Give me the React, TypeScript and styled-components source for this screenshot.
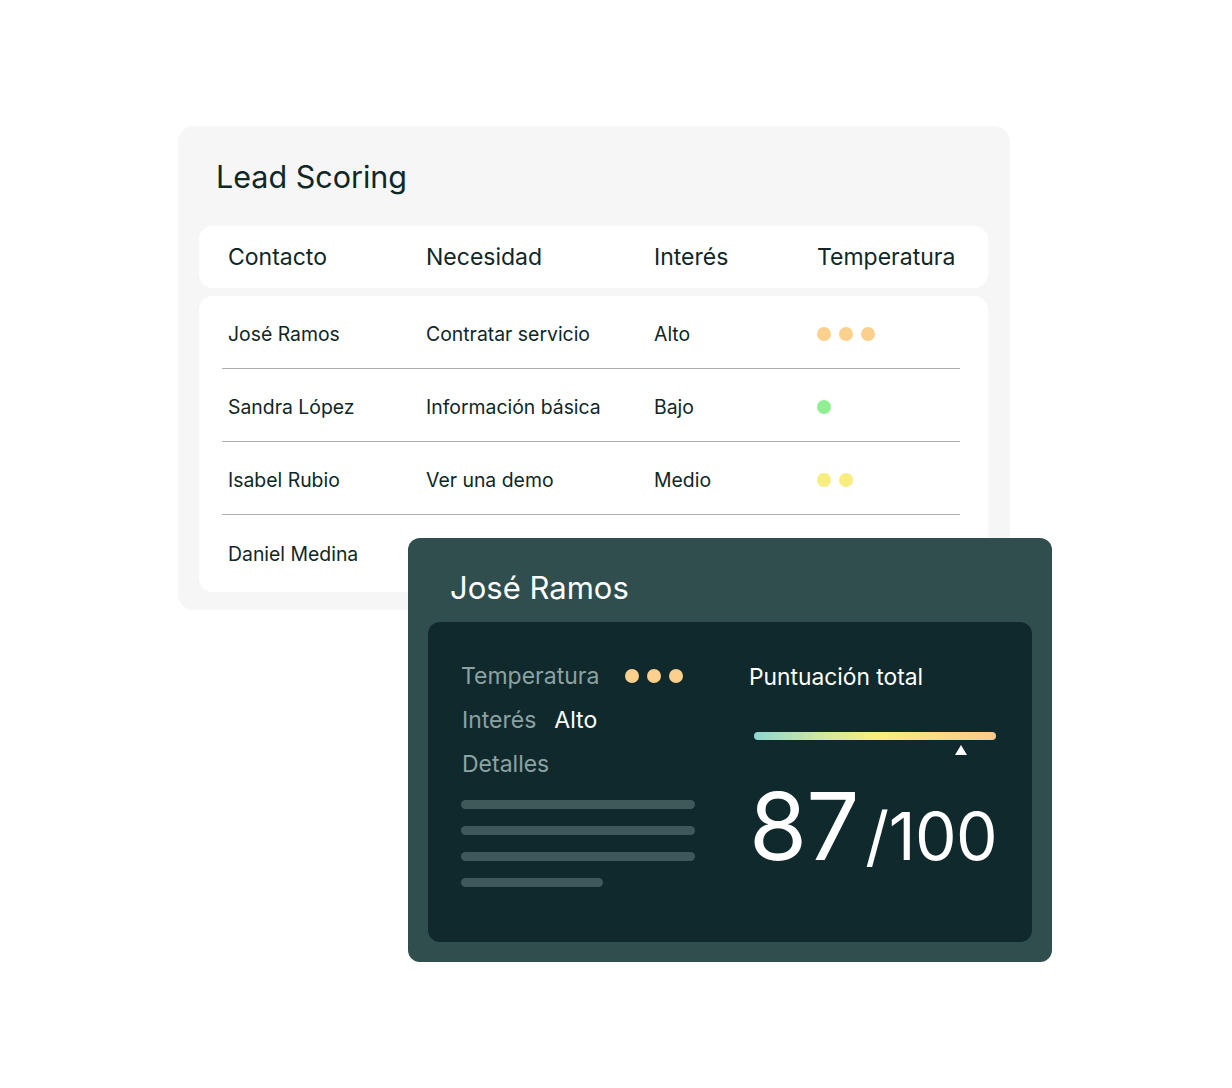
import React from "react";
import styled, { createGlobalStyle } from "styled-components";

type Temp = "hot" | "warm" | "cold";

type LeadType = {
  name: string;
  need: string;
  interest: string;
  temp: Temp;
};

const leads: LeadType[] = [
  { name: "José Ramos", need: "Contratar servicio", interest: "Alto", temp: "hot" },
  { name: "Sandra López", need: "Información básica", interest: "Bajo", temp: "cold" },
  { name: "Isabel Rubio", need: "Ver una demo", interest: "Medio", temp: "warm" },
  { name: "Daniel Medina", need: "", interest: "", temp: "cold" },
];

const tempColors: Record<Temp, { color: string; count: number }> = {
  hot: { color: "#fbcf8c", count: 3 },
  warm: { color: "#f8ee7f", count: 2 },
  cold: { color: "#90ef93", count: 1 },
};

const GlobalStyle = createGlobalStyle`
  body {
    margin: 0;
    background: #ffffff;
    font-family: Inter, "Noto Sans", sans-serif;
    color: #0f2727;
  }
`;

const Stage = styled.div`
  position: relative;
  width: 1232px;
  height: 1088px;
  box-sizing: border-box;
  padding: 126px 0 0 178px;
`;

const LeadCard = styled.div`
  width: 832px;
  height: 484px;
  box-sizing: border-box;
  background: #f6f6f6;
  border-radius: 16px;
  padding: 33px 22px 0 21px;
`;

const Title = styled.h1`
  margin: 0 0 31px 17px;
  font-size: 30.5px;
  line-height: 36px;
  font-weight: 400;
  color: #0f2727;
`;

const Columns = styled.div`
  display: grid;
  grid-template-columns: 198px 228px 163px 1fr;
  align-items: center;
`;

const HeaderBar = styled(Columns)`
  height: 62px;
  background: #ffffff;
  border-radius: 14px;
  padding-left: 29px;
  font-size: 23px;
  color: #0f2727;
`;

const Body = styled.div`
  margin-top: 8px;
  height: 296px;
  background: #ffffff;
  border-radius: 14px;
  padding: 0 28px 0 23px;
`;

const Row = styled(Columns)<{ $last?: boolean }>`
  height: 73px;
  box-sizing: border-box;
  padding: 4px 0 0 6px;
  border-bottom: ${(p) => (p.$last ? "none" : "1px solid #acacac")};
  font-size: 19.4px;
  color: #0f2727;
`;

const Dots = styled.div<{ $gap: number }>`
  display: flex;
  align-items: center;
  gap: ${(p) => p.$gap}px;
`;

const Dot = styled.span<{ $color: string }>`
  width: 14px;
  height: 14px;
  border-radius: 50%;
  background: ${(p) => p.$color};
`;

const TempDots = ({ temp }: { temp: Temp }) => {
  const { color, count } = tempColors[temp];
  return (
    <Dots $gap={8}>
      {Array.from({ length: count }).map((_, i) => (
        <Dot key={i} $color={color} />
      ))}
    </Dots>
  );
};

// floating detail card over the table
const DetailCard = styled.div`
  position: absolute;
  left: 408px;
  top: 538px;
  width: 644px;
  height: 424px;
  box-sizing: border-box;
  background: #2f4e4d;
  border-radius: 12px;
  display: flex;
  flex-direction: column;
  padding: 0 20px 20px;
`;

const DetailTitle = styled.div`
  height: 84px;
  box-sizing: border-box;
  padding: 14px 0 0 22px;
  display: flex;
  align-items: center;
  font-size: 31px;
  color: #ffffff;
`;

const Panel = styled.div`
  flex: 1;
  background: #10292c;
  border-radius: 12px;
  display: grid;
  grid-template-columns: 321px 1fr;
  padding-top: 32px;
`;

const LeftCol = styled.div`
  padding-left: 33px;
  display: flex;
  flex-direction: column;
`;

const InfoLine = styled.div<{ $gap?: number }>`
  height: 44px;
  display: flex;
  align-items: center;
  gap: ${(p) => p.$gap ?? 18}px;
  font-size: 23px;
`;

const Label = styled.span<{ $shift?: number }>`
  color: #8da2a2;
  margin-left: ${(p) => p.$shift ?? 0}px;
`;

const Value = styled.span`
  color: #ffffff;
`;

const Lines = styled.div`
  margin-top: 14px;
  display: flex;
  flex-direction: column;
  gap: 17px;
`;

const TextLine = styled.div<{ $w: number }>`
  width: ${(p) => p.$w}px;
  height: 9px;
  border-radius: 5px;
  background: #3f595b;
`;

const RightCol = styled.div`
  display: flex;
  flex-direction: column;
`;

const ScoreLabel = styled.div`
  height: 44px;
  display: flex;
  align-items: center;
  font-size: 22.8px;
  color: #ffffff;
`;

const Meter = styled.div`
  position: relative;
  margin: 34px 0 0 5px;
  width: 242px;
  height: 8px;
  border-radius: 4px;
  background: linear-gradient(90deg, #8ed7d1 0%, #c9e6a4 25%, #f8ef7d 50%, #fbdc84 75%, #fbc98b 100%);
`;

const Marker = styled.div`
  position: absolute;
  left: 201px;
  top: 13px;
  width: 0;
  height: 0;
  border-left: 6px solid transparent;
  border-right: 6px solid transparent;
  border-bottom: 10px solid #ffffff;
`;

const Score = styled.div`
  margin-top: 39px;
  display: flex;
  align-items: baseline;
  color: #ffffff;
  line-height: 1;
`;

const Big = styled.span`
  font-size: 94px;
  letter-spacing: -1px;
`;

const Small = styled.span`
  font-size: 66px;
  margin-left: 7px;
  letter-spacing: -0.5px;
`;

export default function App() {
  return (
    <>
      <GlobalStyle />
      <Stage>
        <LeadCard>
          <Title>Lead Scoring</Title>
          <HeaderBar>
            <span>Contacto</span>
            <span>Necesidad</span>
            <span>Interés</span>
            <span>Temperatura</span>
          </HeaderBar>
          <Body>
            {leads.map((l, i) => (
              <Row key={l.name} $last={i === leads.length - 1}>
                <span>{l.name}</span>
                <span>{l.need}</span>
                <span>{l.interest}</span>
                {l.interest ? <TempDots temp={l.temp} /> : <span />}
              </Row>
            ))}
          </Body>
        </LeadCard>

        <DetailCard>
          <DetailTitle>José Ramos</DetailTitle>
          <Panel>
            <LeftCol>
              <InfoLine $gap={26}>
                <Label>Temperatura</Label>
                <TempDots temp="hot" />
              </InfoLine>
              <InfoLine>
                <Label $shift={1}>Interés</Label>
                <Value>Alto</Value>
              </InfoLine>
              <InfoLine>
                <Label $shift={1}>Detalles</Label>
              </InfoLine>
              <Lines>
                <TextLine $w={234} />
                <TextLine $w={234} />
                <TextLine $w={234} />
                <TextLine $w={142} />
              </Lines>
            </LeftCol>
            <RightCol>
              <ScoreLabel>Puntuación total</ScoreLabel>
              <Meter>
                <Marker />
              </Meter>
              <Score>
                <Big>87</Big>
                <Small>/100</Small>
              </Score>
            </RightCol>
          </Panel>
        </DetailCard>
      </Stage>
    </>
  );
}
